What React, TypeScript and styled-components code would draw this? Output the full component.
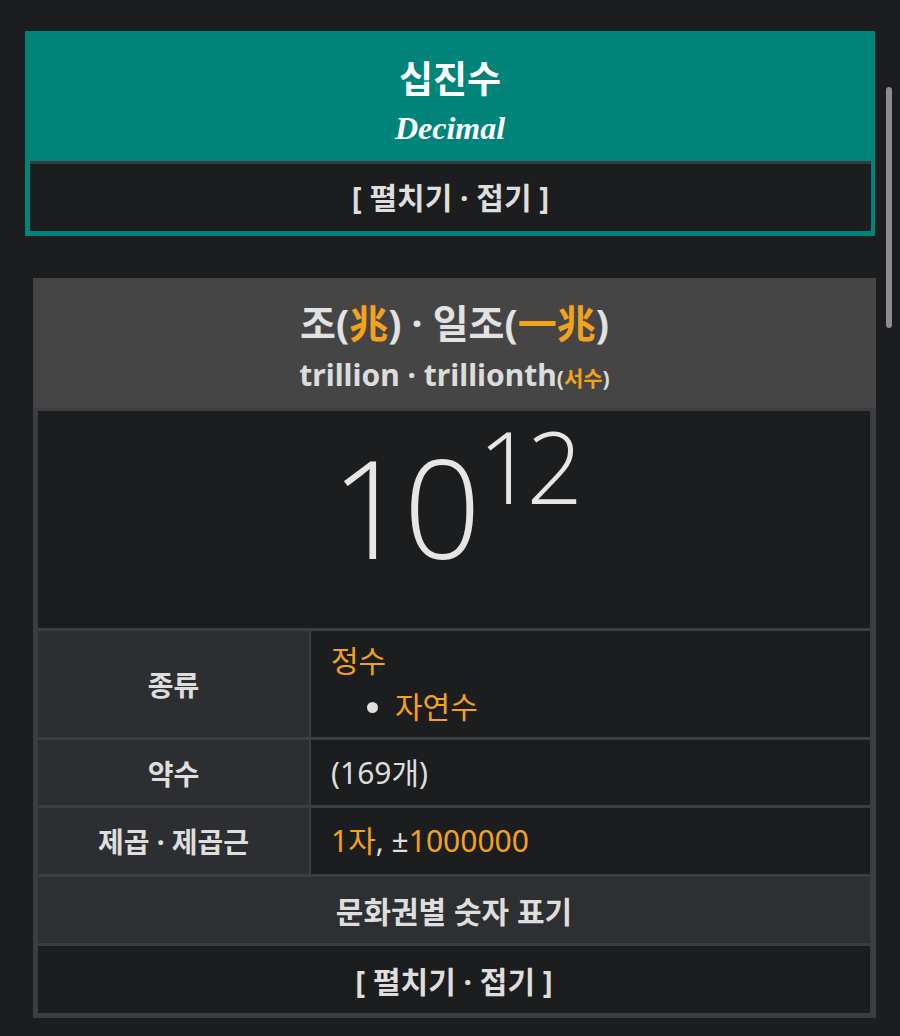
import React from 'react';
import styled, { createGlobalStyle } from 'styled-components';

const GlobalStyle = createGlobalStyle`
  html, body {
    margin: 0;
    padding: 0;
    background: #1c1d1f;
  }
  body {
    font-family: "Noto Sans", "Noto Sans CJK KR", sans-serif;
    color: #e0e0e0;
  }
`;

const Page = styled.div`
  width: 900px;
  min-height: 1036px;
  padding: 31px 0 0 25px;
  box-sizing: border-box;
  position: relative;
  overflow: hidden;
`;

const ScrollThumb = styled.div`
  position: absolute;
  top: 87px;
  right: 8px;
  width: 6px;
  height: 241px;
  border-radius: 3px;
  background: #8d8d8f;
`;

const NavBox = styled.div`
  width: 850px;
  box-sizing: border-box;
  background: #00847a;
  padding: 0 4px 5px 5px;
`;

const NavHeader = styled.div`
  height: 130px;
  box-sizing: border-box;
  margin: 0 -4px 0 -5px;
  padding-top: 24px;
  display: flex;
  flex-direction: column;
  align-items: center;
  gap: 10px;
`;

const NavTitle = styled.div`
  font-family: "Noto Sans CJK KR", sans-serif;
  font-weight: 700;
  font-size: 37px;
  line-height: 44px;
  color: #ffffff;
`;

const NavSubtitle = styled.div`
  font-family: "Liberation Serif", serif;
  font-style: italic;
  font-weight: 700;
  font-size: 32px;
  line-height: 38px;
  color: #ffffff;
`;

const Toggle = styled.div`
  height: 70px;
  box-sizing: border-box;
  padding-bottom: 4px;
  background: #1c1d1f;
  border-top: 3px solid #3b3c41;
  display: flex;
  align-items: center;
  justify-content: center;
  font-family: "Noto Sans", "Noto Sans CJK KR", sans-serif;
  font-weight: 700;
  font-size: 30px;
  color: #dedede;
  white-space: pre;
`;

const InfoTable = styled.div`
  margin: 42px 0 0 8px;
  width: 843px;
  background: #404145;
`;

const InfoHeader = styled.div`
  height: 130px;
  box-sizing: border-box;
  padding-top: 22px;
  background: #454545;
  display: flex;
  flex-direction: column;
  align-items: center;
  gap: 10px;
`;

const InfoTitle = styled.div`
  font-family: "Noto Sans", "Noto Sans CJK KR", sans-serif;
  font-weight: 700;
  font-size: 39px;
  line-height: 46px;
  color: #e2e2e2;
`;

const InfoSubtitle = styled.div`
  font-family: "Noto Sans", "Noto Sans CJK KR", sans-serif;
  font-weight: 700;
  font-size: 30px;
  line-height: 38px;
  color: #dcdcdc;
`;

const Small = styled.span`
  font-size: 21px;
`;

const Accent = styled.span`
  color: #f3a21c;
`;

const Grid = styled.div`
  display: grid;
  grid-template-columns: 271px 559px;
  grid-template-rows: 217px 106px 65px 66px 66px 67px;
  column-gap: 2px;
  row-gap: 3px;
  padding: 3px 6px 5px 5px;
  background: #3c3d42;
`;

const Power = styled.div`
  grid-column: 1 / -1;
  background: #1c1d1f;
  display: flex;
  justify-content: center;
  align-items: flex-start;
  padding-top: 14px;
  padding-right: 2px;
  font-family: "Open Sans", "Noto Sans", sans-serif;
  font-weight: 360;
  color: #e6e6e6;
`;

const Base = styled.span`
  font-size: 136px;
  line-height: 1;
  margin-top: 14px;
  letter-spacing: -5px;
`;

const Exponent = styled.span`
  font-size: 99px;
  line-height: 1;
  margin-left: 2px;
  margin-top: -9px;
  letter-spacing: -8px;
`;

const Label = styled.div`
  background: #2d2e32;
  display: flex;
  align-items: center;
  justify-content: center;
  font-family: "Noto Sans", "Noto Sans CJK KR", sans-serif;
  font-weight: 700;
  font-size: 28px;
  color: #dedede;
`;

const Value = styled.div`
  background: #1c1d1f;
  display: flex;
  flex-direction: column;
  justify-content: center;
  padding-left: 20px;
  font-family: "Noto Sans", "Noto Sans CJK KR", sans-serif;
  font-size: 30px;
  line-height: 40px;
  color: #dedede;
`;

const SubList = styled.ul`
  margin: 6px 0 0 0;
  padding-left: 64px;
  line-height: 40px;
  li::marker {
    color: #dedede;
  }
`;

const Wide = styled.div<{ $dark?: boolean }>`
  grid-column: 1 / -1;
  background: ${p => (p.$dark ? '#1c1d1f' : '#2e2f33')};
  display: flex;
  align-items: center;
  justify-content: center;
  font-family: "Noto Sans", "Noto Sans CJK KR", sans-serif;
  font-weight: 700;
  font-size: 30px;
  color: #dedede;
  white-space: pre;
`;

export default function App() {
  return (
    <>
      <GlobalStyle />
      <Page>
        <NavBox>
          <NavHeader>
            <NavTitle>십진수</NavTitle>
            <NavSubtitle>Decimal</NavSubtitle>
          </NavHeader>
          <Toggle>[ 펼치기 · 접기 ]</Toggle>
        </NavBox>

        <InfoTable>
          <InfoHeader>
            <InfoTitle>
              조(<Accent>兆</Accent>) · 일조(<Accent>一兆</Accent>)
            </InfoTitle>
            <InfoSubtitle>
              trillion · trillionth<Small>(<Accent>서수</Accent>)</Small>
            </InfoSubtitle>
          </InfoHeader>
          <Grid>
            <Power>
              <Base>10</Base>
              <Exponent>12</Exponent>
            </Power>

            <Label>종류</Label>
            <Value>
              <Accent>정수</Accent>
              <SubList>
                <li>
                  <Accent>자연수</Accent>
                </li>
              </SubList>
            </Value>

            <Label>약수</Label>
            <Value>(169개)</Value>

            <Label>제곱 · 제곱근</Label>
            <Value>
              <span>
                <Accent>1자</Accent>, ±<Accent>1000000</Accent>
              </span>
            </Value>

            <Wide>문화권별 숫자 표기</Wide>
            <Wide $dark>[ 펼치기 · 접기 ]</Wide>
          </Grid>
        </InfoTable>
        <ScrollThumb />
      </Page>
    </>
  );
}
